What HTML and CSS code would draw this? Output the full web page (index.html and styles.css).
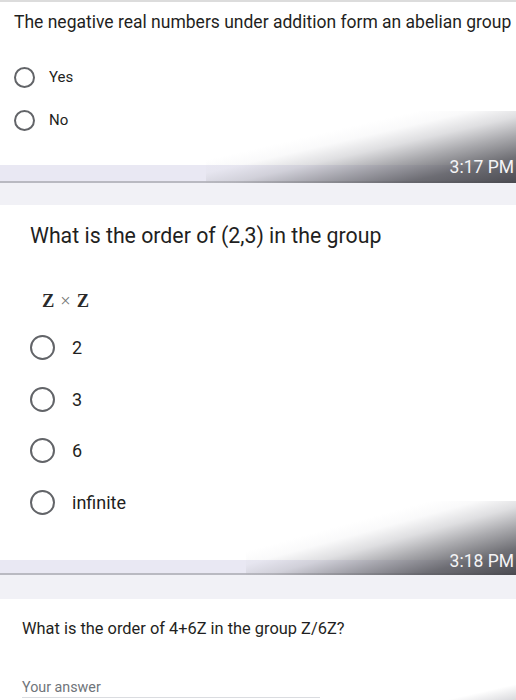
FILE: index.html
```html
<!DOCTYPE html>
<html lang="en">
<head>
<meta charset="utf-8">
<title>Quiz</title>
<link rel="stylesheet" href="styles.css">
</head>
<body>
<div class="topline"></div>

<section class="card card-1">
  <div class="q1-title">The negative real numbers under addition form an abelian group</div>
  <div class="options-1">
    <label class="opt-1"><span class="radio r1"></span><span>Yes</span></label>
    <label class="opt-1"><span class="radio r1"></span><span>No</span></label>
  </div>
</section>

<div class="band band-1">
  <div class="lav lav-1"></div>
  <div class="sep"></div>
  <div class="overlay ov-1"><span class="stamp stamp-1">3:17 PM</span></div>
</div>
<div class="light light-1"></div>

<section class="card card-2">
  <div class="q2-title">What is the order of (2,3) in the group</div>
  <div class="math"><b>Z</b><span class="times">×</span><b>Z</b></div>
  <div class="options-2">
    <label class="opt-2"><span class="radio r2"></span><span>2</span></label>
    <label class="opt-2"><span class="radio r2"></span><span>3</span></label>
    <label class="opt-2"><span class="radio r2"></span><span>6</span></label>
    <label class="opt-2"><span class="radio r2"></span><span>infinite</span></label>
  </div>
</section>

<div class="band band-2">
  <div class="lav lav-2"></div>
  <div class="sep"></div>
  <div class="overlay ov-2"><span class="stamp stamp-2">3:18 PM</span></div>
</div>
<div class="light light-2"></div>

<section class="card card-3">
  <div class="q3-title">What is the order of 4+6Z in the group Z/6Z?</div>
  <div class="answer">Your answer</div>
  <div class="corner-shade"></div>
</section>
</body>
</html>
```
FILE: styles.css
```css
* { box-sizing: border-box; }
html, body { margin: 0; padding: 0; }
body {
  width: 516px;
  height: 700px;
  overflow: hidden;
  background: #ffffff;
  font-family: Roboto, "Noto Sans", Arial, sans-serif;
  color: #1f1f22;
}

.topline { height: 2px; background: #dcdcdc; }

.card { background: #ffffff; position: relative; }

/* ---- question 1 ---- */
.card-1 { padding: 8px 0 23.5px 14px; }
.q1-title { font-size: 17.5px; line-height: 24px; white-space: nowrap; }
.options-1 { margin-top: 21.5px; display: flex; flex-direction: column; }
.opt-1 {
  height: 43px;
  display: flex;
  align-items: center;
  gap: 14px;
  font-size: 15px;
}

.radio {
  display: block;
  flex: none;
  border-radius: 50%;
  border: 2px solid #626468;
  background: #fff;
}
.r1 { width: 21px; height: 21px; }
.r2 { width: 25px; height: 25px; }

/* ---- separators ---- */
.band { position: relative; }
.lav { background: #e9e8f3; }
.lav-1 { height: 16px; }
.lav-2 { height: 13px; }
.sep { height: 2px; background: #b9b9c1; }
.light { background: #f1f1f6; }
.light-1 { height: 22px; }
.light-2 { height: 24px; }

.overlay {
  position: absolute;
  right: 0;
  bottom: 0;
  background: linear-gradient(to top left,
    rgba(70, 70, 76, 0.97) 0%,
    rgba(92, 92, 98, 0.88) 18%,
    rgba(125, 125, 131, 0.66) 33%,
    rgba(170, 170, 176, 0.38) 46%,
    rgba(215, 215, 220, 0.14) 57%,
    rgba(255, 255, 255, 0) 66%);
}
.ov-1 { width: 310px; height: 72px; }
.ov-2 { width: 270px; height: 74px; }

.stamp {
  position: absolute;
  right: 2px;
  font-size: 17.5px;
  line-height: 20px;
  color: #f4f4f6;
  white-space: nowrap;
}
.stamp-1 { bottom: 5.7px; }
.stamp-2 { bottom: 4.3px; }

/* ---- question 2 ---- */
.card-2 {
  padding: 16.7px 0 31.75px 30px;
  border-bottom-left-radius: 10px;
}
.q2-title { font-size: 21.3px; line-height: 28px; white-space: nowrap; }
.math {
  margin-top: 38.9px;
  padding-left: 12px;
  font-family: "Liberation Serif", "DejaVu Serif", serif;
  font-size: 18.5px;
  line-height: 24px;
  color: #2a2a2a;
}
.math b { font-weight: 700; }
.times { color: #777; font-weight: 400; margin: 0 6px; }
.options-2 { margin-top: 9.65px; display: flex; flex-direction: column; }
.opt-2 {
  height: 51.5px;
  display: flex;
  align-items: center;
  gap: 17px;
  font-size: 18px;
}

/* ---- question 3 ---- */
.card-3 { padding: 19.4px 0 0 22px; height: 101px; }
.q3-title { font-size: 16.4px; line-height: 22px; white-space: nowrap; }
.answer {
  margin-top: 36.7px;
  width: 298px;
  height: 21px;
  font-size: 14.3px;
  line-height: 20px;
  color: #70757a;
  border-bottom: 1px solid #dadce0;
}
.corner-shade {
  position: absolute;
  right: 0;
  bottom: 0;
  width: 70px;
  height: 16px;
  background: linear-gradient(to top left, rgba(200, 200, 205, 0.7) 0%, rgba(255, 255, 255, 0) 50%);
}
```
